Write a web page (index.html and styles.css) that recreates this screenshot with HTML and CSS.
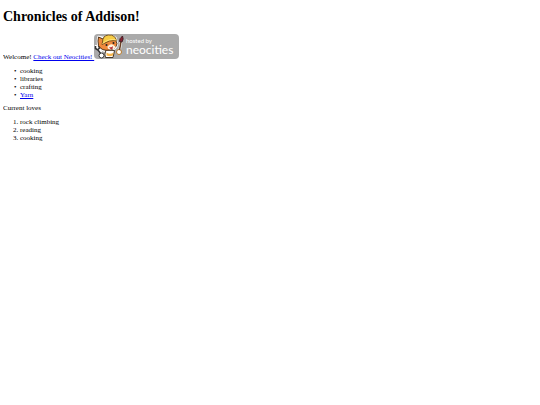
FILE: index.html
```html
<!DOCTYPE html>
<html lang="en">
  <head>
    <meta charset="UTF-8">
    <meta name="viewport" content="width=device-width, initial-scale=1.0">
    <title>Chronicles of Addison!</title>
    <link rel="stylesheet" href="styles.css">
  </head>
  <body>
    <h1>Chronicles of Addison!</h1>

    <p>Welcome!
      <a href="https://neocities.org">Check out Neocities! <svg class="badge" viewBox="0 0 170 50" role="img" aria-label="hosted by neocities">
        <rect width="170" height="50" rx="8" fill="#aaa"/>
        <!-- cat outline -->
        <g stroke="#fff" stroke-width="5" stroke-linejoin="round" stroke-linecap="round" fill="#fff">
          <path d="M9 6l10 2Q32-1 43 8l3 12q-2 10-14 13-17 3-23-9Q7 14 9 6z"/>
          <path d="M4 24l10 12M55 8l-4 26" fill="none"/>
        </g>
        <!-- wrench -->
        <path d="M3 24v5l5 3 7 9M9 23l2 5-4 4" fill="none" stroke="#333" stroke-width="3"/>
        <!-- body and paws -->
        <path d="M24 32q-4 9-1 15h15l3-14z" fill="#fff" stroke="#443526" stroke-width="2"/>
        <path d="M25 37q7 5 14 0l-1 6q-6 3-13 0z" fill="#f7b64c"/>
        <circle cx="15" cy="43" r="5" fill="#fff" stroke="#333" stroke-width="2"/>
        <circle cx="50" cy="36" r="5" fill="#fff" stroke="#b87928" stroke-width="2"/>
        <!-- head -->
        <path d="M9 6l9 4q10-8 23-3l5 12q-1 10-14 13-17 3-23-9Q7 14 9 6z" fill="#f08a3c" stroke="#503318" stroke-width="2"/>
        <path d="M27 25q8-8 14-1l3 2q-3 5-11 5-6 0-6-6z" fill="#fff2dc"/>
        <!-- hard hat -->
        <path d="M17 16Q17 3 29 2q13-1 16 11-14-2-29 8z" fill="#f6cc45" stroke="#775420" stroke-width="2"/>
        <path d="M17 19q13-11 28-7" fill="none" stroke="#ffe47a" stroke-width="2"/>
        <circle cx="25" cy="22" r="2" fill="#222"/>
        <circle cx="39" cy="18" r="2" fill="#222"/>
        <path d="M30 26q5 2 8-2l-1 6q-4 2-7-4z" fill="#ba3038"/>
        <!-- paint brush -->
        <path d="M51 32l3-17" stroke="#694025" stroke-width="3"/>
        <path d="M51 15q0-7 6-11 3 6-1 12z" fill="#8b2030" stroke="#422027" stroke-width="2"/>
        <text class="badge-small" x="64" y="18">hosted by</text>
        <text class="badge-name" x="64" y="40">neocities</text>
      </svg></a>
    </p>

    <ul>
      <li>cooking</li>
      <li>libraries</li>
      <li>crafting</li>
      <li><a href="#yarn">Yarn</a></li>
    </ul>

    <p>Current loves</p>

    <ol>
      <li>rock climbing</li>
      <li>reading</li>
      <li>cooking</li>
    </ol>
  </body>
</html>
```

FILE: styles.css
```css
body {
  margin: 9px 3px;
  font-family: "Liberation Serif", "Times New Roman", serif;
  font-size: 7px;
  line-height: 8px;
  color: #000;
  background-color: #fff;
}
h1 {
  margin: 0 0 9px;
  font-size: 14px;
  line-height: 16px;
}
p {
  margin: 5px 0;
}
a {
  color: #0000ee;
}
ul,
ol {
  margin: 6px 0 5px;
  padding-left: 17px;
}
ul {
  list-style-type: "•\00a0\00a0";
}
.badge {
  width: 85px;
  height: 25px;
}
.badge-small,
.badge-name {
  font-family: Lato, sans-serif;
  fill: #fff;
}
.badge-small {
  font-size: 12px;
}
.badge-name {
  font-size: 24px;
}
```
